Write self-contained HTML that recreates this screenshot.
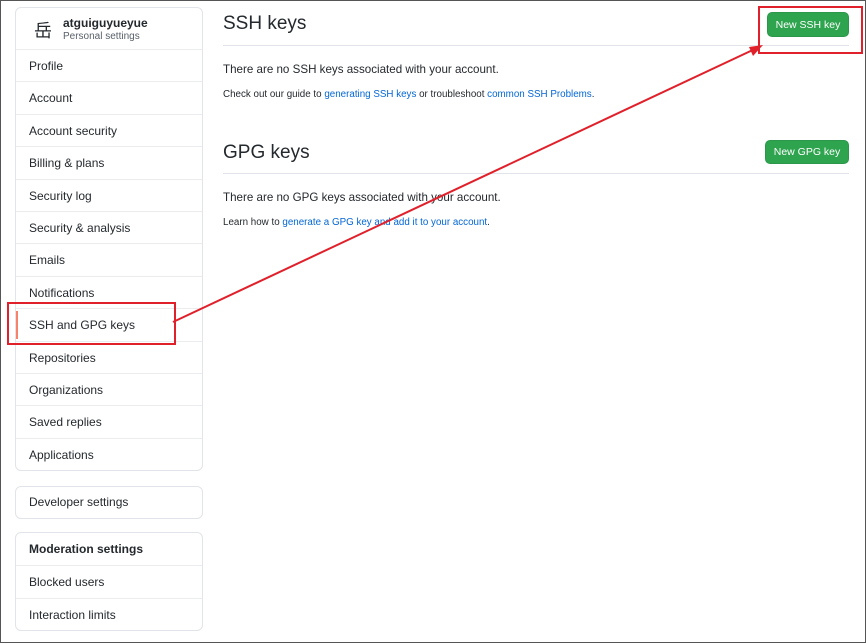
<!DOCTYPE html><html><head><style>
*{box-sizing:border-box;margin:0;padding:0}
body{width:866px;height:643px;background:#fff;font-family:"Liberation Sans","Noto Sans CJK SC",sans-serif;color:#24292e;position:relative;overflow:hidden;border:1px solid #555}
.box{position:absolute;left:14px;width:188px;border:1px solid #e1e4e8;border-radius:6px;background:#fff}
.row{height:32.4px;line-height:32px;border-top:1px solid #eaecef;padding-left:13px;font-size:12px;position:relative}
.row:first-child{border-top:none}
.hdr{height:41px;position:relative}
.btn{position:absolute;background:#2ea44f;color:#fff;font-size:10.5px;border-radius:5px;display:flex;align-items:center;justify-content:center;border:1px solid #2c974b}
h2{position:absolute;left:222px;font-weight:400;font-size:19px}
.hr{position:absolute;left:222px;width:626px;border-top:1px solid #e1e4e8}
p{position:absolute;left:222px;font-size:11.6px}
p.s{font-size:9.8px}
a{color:#0366d6;text-decoration:none}
.red{position:absolute;border:2px solid #e0202a}
</style></head><body>
<div class="box" style="top:6px">
<div class="hdr"><span style="position:absolute;left:18px;top:9px;font-size:18px">岳</span>
<div style="position:absolute;left:47px;top:8px;font-size:12px;font-weight:bold">atguiguyueyue</div>
<div style="position:absolute;left:47px;top:23px;font-size:10px;color:#586069">Personal settings</div></div>
<div class="row">Profile</div><div class="row">Account</div><div class="row">Account security</div><div class="row">Billing &amp; plans</div><div class="row">Security log</div><div class="row">Security &amp; analysis</div><div class="row">Emails</div><div class="row">Notifications</div>
<div class="row"><span style="position:absolute;left:0;top:2px;width:2px;height:28px;background:#f9826c"></span>SSH and GPG keys</div>
<div class="row">Repositories</div><div class="row">Organizations</div><div class="row">Saved replies</div><div class="row">Applications</div>
</div>
<div class="box" style="top:485px"><div class="row" style="height:31px;line-height:31px">Developer settings</div></div>
<div class="box" style="top:531px"><div class="row" style="font-weight:bold">Moderation settings</div><div class="row">Blocked users</div><div class="row">Interaction limits</div></div>
<h2 style="top:12px">SSH keys</h2><div class="hr" style="top:44px"></div>
<div class="btn" style="left:766px;top:11px;width:82px;height:25px">New SSH key</div>
<p style="top:62px">There are no SSH keys associated with your account.</p>
<p class="s" style="top:88px">Check out our guide to <a>generating SSH keys</a> or troubleshoot <a>common SSH Problems</a>.</p>
<h2 style="top:141px">GPG keys</h2><div class="hr" style="top:172px"></div>
<div class="btn" style="left:764px;top:139px;width:84px;height:24px">New GPG key</div>
<p style="top:190px">There are no GPG keys associated with your account.</p>
<p class="s" style="top:216px">Learn how to <a>generate a GPG key and add it to your account</a>.</p>
<div class="red" style="left:6px;top:301px;width:169px;height:43px"></div>
<div class="red" style="left:757px;top:5px;width:105px;height:48px"></div>
<svg style="position:absolute;left:0;top:0" width="866" height="643"><line x1="172" y1="321" x2="756" y2="47" stroke="#e0202a" stroke-width="2"/><polygon points="762,44 748,46 752,55" fill="#e0202a"/></svg>
</body></html>
